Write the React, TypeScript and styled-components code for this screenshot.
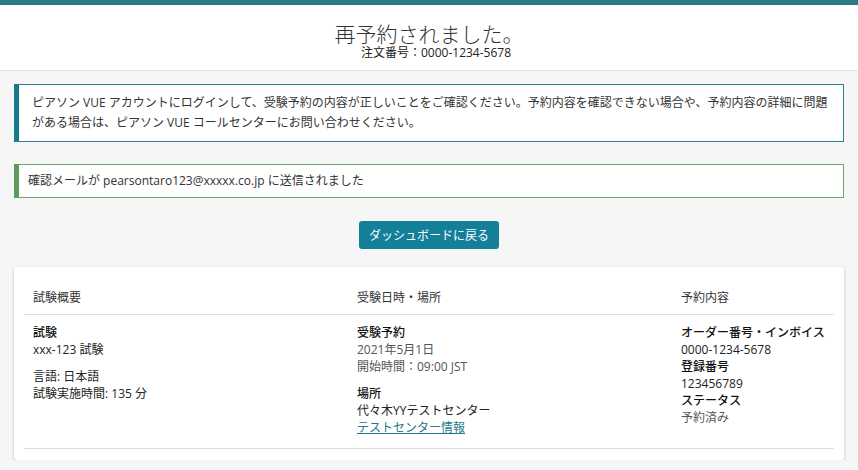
import React from 'react'
import styled, { createGlobalStyle } from 'styled-components'

const GlobalStyle = createGlobalStyle`
  html, body {
    margin: 0;
    padding: 0;
    background: #f6f6f6;
  }

  body {
    font-family: 'Open Sans', 'Noto Sans CJK JP', sans-serif;
    font-size: 12px;
    color: #333;
  }
`

const Header = styled.header`
  background: #fff;
  border-top: 5px solid #2b7a83;
  border-bottom: 1px solid #e2e2e2;
  padding: 15px 0 10px;
  text-align: center;
`

const Title = styled.h1`
  margin: 0;
  font-family: 'Noto Sans CJK JP', sans-serif;
  font-size: 21px;
  font-weight: 300;
  line-height: 26px;
  color: #333;
`

const OrderNo = styled.div`
  padding-left: 14px;
  font-size: 12px;
  line-height: 14px;
  color: #222;
`

const Main = styled.main`
  padding: 13px 14px 0;
`

const Alert = styled.div<{ $tone: 'info' | 'success' }>`
  background: #fff;
  border: 1px solid ${(p) => (p.$tone === 'info' ? '#2f7f8a' : '#6ea56e')};
  border-left: 5px solid ${(p) => (p.$tone === 'info' ? '#167a8f' : '#5c9b5c')};
  padding: ${(p) => (p.$tone === 'info' ? '8px 10px 8px 13px' : '8px 9px')};
  line-height: ${(p) => (p.$tone === 'info' ? '20px' : '16px')};
  color: #333;

  & + & {
    margin-top: 22px;
  }
`

const ButtonRow = styled.div`
  display: flex;
  justify-content: center;
  margin-top: 23px;
`

const Button = styled.button`
  width: 140px;
  height: 28px;
  border: none;
  border-radius: 3px;
  background: #137f99;
  color: #fff;
  font-family: inherit;
  font-size: 12px;
  cursor: pointer;
`

const Card = styled.section`
  margin-top: 18px;
  background: #fff;
  border-radius: 3px;
  box-shadow: 0 1px 3px rgba(0, 0, 0, 0.25);
  padding: 22px 10px 11px;
`

const Row = styled.div<{ $head?: boolean }>`
  display: grid;
  grid-template-columns: 40% 40% 20%;
  border-bottom: 1px solid #dddddd;
  padding: ${(p) => (p.$head ? '0 0 8px' : '9px 0 12px')};
  line-height: 17px;
`

const Cell = styled.div`
  padding: 0 9px;
`

const Group = styled.div`
  & + & {
    margin-top: 10px;
  }
`

const Label = styled.div`
  font-weight: 500;
  color: #111;
`

const Value = styled.div<{ $muted?: boolean }>`
  color: ${(p) => (p.$muted ? '#555' : '#222')};
`

const InfoLink = styled.a`
  color: #24798a;
  text-decoration: underline;
`

const App = (): JSX.Element => {
  return (
    <>
      <GlobalStyle />
      <Header>
        <Title>再予約されました。</Title>
        <OrderNo>注文番号：0000-1234-5678</OrderNo>
      </Header>
      <Main>
        <Alert $tone="info">
          ピアソン VUE アカウントにログインして、受験予約の内容が正しいことをご確認ください。予約内容を確認できない場合や、予約内容の詳細に問題がある場合は、ピアソン VUE コールセンターにお問い合わせください。
        </Alert>
        <Alert $tone="success">
          確認メールが pearsontaro123@xxxxx.co.jp に送信されました
        </Alert>
        <ButtonRow>
          <Button>ダッシュボードに戻る</Button>
        </ButtonRow>
        <Card>
          <Row $head>
            <Cell>試験概要</Cell>
            <Cell>受験日時・場所</Cell>
            <Cell>予約内容</Cell>
          </Row>
          <Row>
            <Cell>
              <Group>
                <Label>試験</Label>
                <Value>xxx-123 試験</Value>
              </Group>
              <Group>
                <Value>言語: 日本語</Value>
                <Value>試験実施時間: 135 分</Value>
              </Group>
            </Cell>
            <Cell>
              <Group>
                <Label>受験予約</Label>
                <Value $muted>2021年5月1日</Value>
                <Value $muted>開始時間：09:00 JST</Value>
              </Group>
              <Group>
                <Label>場所</Label>
                <Value>代々木YYテストセンター</Value>
                <InfoLink href="#">テストセンター情報</InfoLink>
              </Group>
            </Cell>
            <Cell>
              <Group>
                <Label>オーダー番号・インボイス</Label>
                <Value>0000-1234-5678</Value>
                <Label>登録番号</Label>
                <Value>123456789</Value>
                <Label>ステータス</Label>
                <Value $muted>予約済み</Value>
              </Group>
            </Cell>
          </Row>
        </Card>
      </Main>
    </>
  )
}

export default App
